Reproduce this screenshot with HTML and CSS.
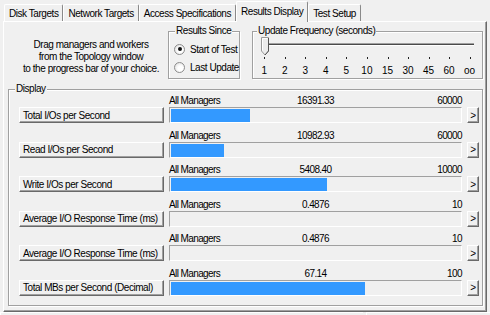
FILE: index.html
```html
<!DOCTYPE html>
<html lang="en">
<head>
    <meta charset="UTF-8">
    <title>Results Display</title>
    <link rel="stylesheet" href="styles.css">
</head>
<body>
    <div class="window">
        <div class="tabs">
            <div class="tab">Disk Targets</div>
            <div class="tab">Network Targets</div>
            <div class="tab">Access Specifications</div>
            <div class="tab active">Results Display</div>
            <div class="tab">Test Setup</div>
        </div>

        <div class="panel">
            <div class="top">
                <p class="hint">Drag managers and workers<br>from the Topology window<br>to the progress bar of your choice.</p>

                <fieldset class="group since">
                    <legend>Results Since</legend>
                    <div class="radio"><span class="dot checked"></span>Start of Test</div>
                    <div class="radio"><span class="dot"></span>Last Update</div>
                </fieldset>

                <fieldset class="group freq">
                    <legend>Update Frequency (seconds)</legend>
                    <svg class="slider" width="228" height="25" viewBox="0 0 228 25">
                        <rect x="9" y="6" width="212" height="1" fill="#a0a0a0"/>
                        <rect x="9" y="7" width="212" height="1" fill="#4a4a4a"/>
                        <rect x="9" y="8" width="212" height="1" fill="#ffffff"/>
                        <g fill="#222">
                            <rect x="11" y="20" width="1" height="2"/>
                            <rect x="32" y="20" width="1" height="2"/>
                            <rect x="52" y="20" width="1" height="2"/>
                            <rect x="73" y="20" width="1" height="2"/>
                            <rect x="93" y="20" width="1" height="2"/>
                            <rect x="114" y="20" width="1" height="2"/>
                            <rect x="135" y="20" width="1" height="2"/>
                            <rect x="155" y="20" width="1" height="2"/>
                            <rect x="176" y="20" width="1" height="2"/>
                            <rect x="196" y="20" width="1" height="2"/>
                            <rect x="217" y="20" width="1" height="2"/>
                        </g>
                        <!-- thumb -->
                        <polygon points="8.5,0.5 15.5,0.5 15.5,14 12,18 8.5,14" fill="#ececec" stroke="#9a9a9a"/>
                        <polyline points="9.5,13.5 9.5,1.5 14.5,1.5" fill="none" stroke="#fff"/>
                        <polyline points="15.5,1 15.5,14 12,18" fill="none" stroke="#555"/>
                    </svg>
                    <div class="scale">
                        <span>1</span><span>2</span><span>3</span><span>4</span><span>5</span><span>10</span>
                        <span>15</span><span>30</span><span>45</span><span>60</span><span>oo</span>
                    </div>
                </fieldset>
            </div>

            <fieldset class="group display">
                <legend>Display</legend>
                <div class="metrics">
                    <div class="metric">
                        <div class="head"><span>All Managers</span><span>16391.33</span><span class="max">60000</span></div>
                        <button class="name">Total I/Os per Second</button>
                        <div class="bar"><div class="fill" style="width: 27.32%"></div></div>
                        <button class="more">&gt;</button>
                    </div>
                    <div class="metric">
                        <div class="head"><span>All Managers</span><span>10982.93</span><span class="max">60000</span></div>
                        <button class="name">Read I/Os per Second</button>
                        <div class="bar"><div class="fill" style="width: 18.3%"></div></div>
                        <button class="more">&gt;</button>
                    </div>
                    <div class="metric">
                        <div class="head"><span>All Managers</span><span>5408.40</span><span class="max">10000</span></div>
                        <button class="name">Write I/Os per Second</button>
                        <div class="bar"><div class="fill" style="width: 54.08%"></div></div>
                        <button class="more">&gt;</button>
                    </div>
                    <div class="metric">
                        <div class="head"><span>All Managers</span><span>0.4876</span><span class="max">10</span></div>
                        <button class="name">Average I/O Response Time (ms)</button>
                        <div class="bar"></div>
                        <button class="more">&gt;</button>
                    </div>
                    <div class="metric">
                        <div class="head"><span>All Managers</span><span>0.4876</span><span class="max">10</span></div>
                        <button class="name">Average I/O Response Time (ms)</button>
                        <div class="bar"></div>
                        <button class="more">&gt;</button>
                    </div>
                    <div class="metric">
                        <div class="head"><span>All Managers</span><span>67.14</span><span class="max">100</span></div>
                        <button class="name">Total MBs per Second (Decimal)</button>
                        <div class="bar"><div class="fill" style="width: 67.14%"></div></div>
                        <button class="more">&gt;</button>
                    </div>
                </div>
            </fieldset>
        </div>

        <div class="footer">
            <div class="pane left"></div>
            <div class="pane"></div>
        </div>
    </div>
</body>
</html>
```

FILE: styles.css
```css
body {
    margin: 0;
    background: #f0f0f0;
    font-family: "Liberation Sans", Arial, sans-serif;
    font-size: 10px;
    letter-spacing: -0.45px;
    color: #000;
}
.window {
    width: 490px;
    height: 315px;
    overflow: hidden;
}

/* tab strip */
.tabs {
    display: flex;
    align-items: flex-end;
    height: 21px;
    padding-left: 4px;
    white-space: nowrap;
}
.tab {
    height: 15px;
    padding: 1px 4px 0;
    line-height: 15px;
    border-top: 1px solid #fff;
    border-left: 1px solid #fff;
    border-right: 1px solid #8a8a8a;
    border-radius: 2px 2px 0 0;
}
.tab.active {
    position: relative;
    z-index: 1;
    height: 19px;
    line-height: 17px;
    margin-bottom: -1px;
    background: #f0f0f0;
}

/* tab page */
.panel {
    margin: 0 3px;
    height: 289px;
    border: 1px solid;
    border-color: #fff #696969 #696969 #fff;
    box-shadow: inset -1px -1px 0 #a0a0a0;
}
.top {
    display: flex;
    padding-top: 3px;
}
.hint {
    box-sizing: border-box;
    width: 164px;
    margin: 0;
    padding: 14px 0 0 10px;
    line-height: 12px;
    text-align: center;
    white-space: nowrap;
}

/* group boxes */
.group {
    margin: 0;
    padding: 0;
    min-width: 0;
    box-sizing: border-box;
    border: 1px solid #a0a0a0;
    box-shadow: inset 1px 1px 0 #fff, 1px 1px 0 #fff;
    white-space: nowrap;
}
.group legend {
    margin-left: 6px;
    padding: 0 1px;
    line-height: 12px;
    background: #f0f0f0;
}
.since {
    width: 72px;
    height: 54px;
}
.freq {
    width: 231px;
    height: 54px;
    margin-left: 12px;
}
.freq legend {
    margin-left: 4px;
}

.radio {
    display: flex;
    align-items: center;
    gap: 5px;
    height: 18px;
    padding-left: 5px;
}
.radio:first-of-type {
    margin-top: 3px;
}
.dot {
    box-sizing: border-box;
    width: 11px;
    height: 11px;
    border: 1px solid #8c8c8c;
    border-radius: 50%;
    background: radial-gradient(circle at 60% 60%, #fff 30%, #d8d8d8 100%);
    display: flex;
    align-items: center;
    justify-content: center;
}
.dot.checked::after {
    content: "";
    width: 4px;
    height: 4px;
    border-radius: 50%;
    background: #111;
}

.slider {
    display: block;
}
.scale {
    display: flex;
    margin: 2px 0 0 1px;
    line-height: 13px;
    letter-spacing: 0;
}
.scale span {
    width: 20.54px;
    flex: none;
    text-align: center;
}

/* display box */
.display {
    width: 475px;
    margin: 4px 0 0 4px;
    padding-bottom: 9px;
}
.metrics {
    display: flex;
    flex-direction: column;
    gap: 6.5px;
    padding-left: 10px;
}
.metric {
    display: grid;
    grid-template-columns: 145px 293px 12px;
    grid-template-rows: 12px 16px;
    column-gap: 5px;
    grid-template-areas:
        ". head ."
        "name bar more";
}
.head {
    grid-area: head;
    display: grid;
    grid-template-columns: 1fr auto 1fr;
    line-height: 12px;
    letter-spacing: -0.6px;
}
.head .max {
    text-align: right;
}

button {
    font: inherit;
    letter-spacing: inherit;
    color: #000;
    margin: 0;
    padding: 0;
    background: #f0f0f0;
    border: 1px solid;
    border-color: #fff #696969 #696969 #fff;
    box-shadow: inset -1px -1px 0 #a0a0a0;
    border-radius: 0;
    white-space: nowrap;
}
.name {
    grid-area: name;
    text-align: left;
    padding-left: 3px;
}
.more {
    grid-area: more;
    text-align: center;
}
.bar {
    grid-area: bar;
    box-sizing: border-box;
    height: 16px;
    padding: 1px 1px 0;
    border: 1px solid;
    border-color: #a0a0a0 #fff #fff #a0a0a0;
}
.fill {
    height: 13px;
    background: #3399ff;
}

.footer {
    display: flex;
    gap: 3px;
    height: 3px;
}
.pane {
    flex: 1;
    border-top: 1px solid #fff;
    border-left: 1px solid #fff;
}
.pane.left {
    flex: none;
    width: 362px;
}
```
